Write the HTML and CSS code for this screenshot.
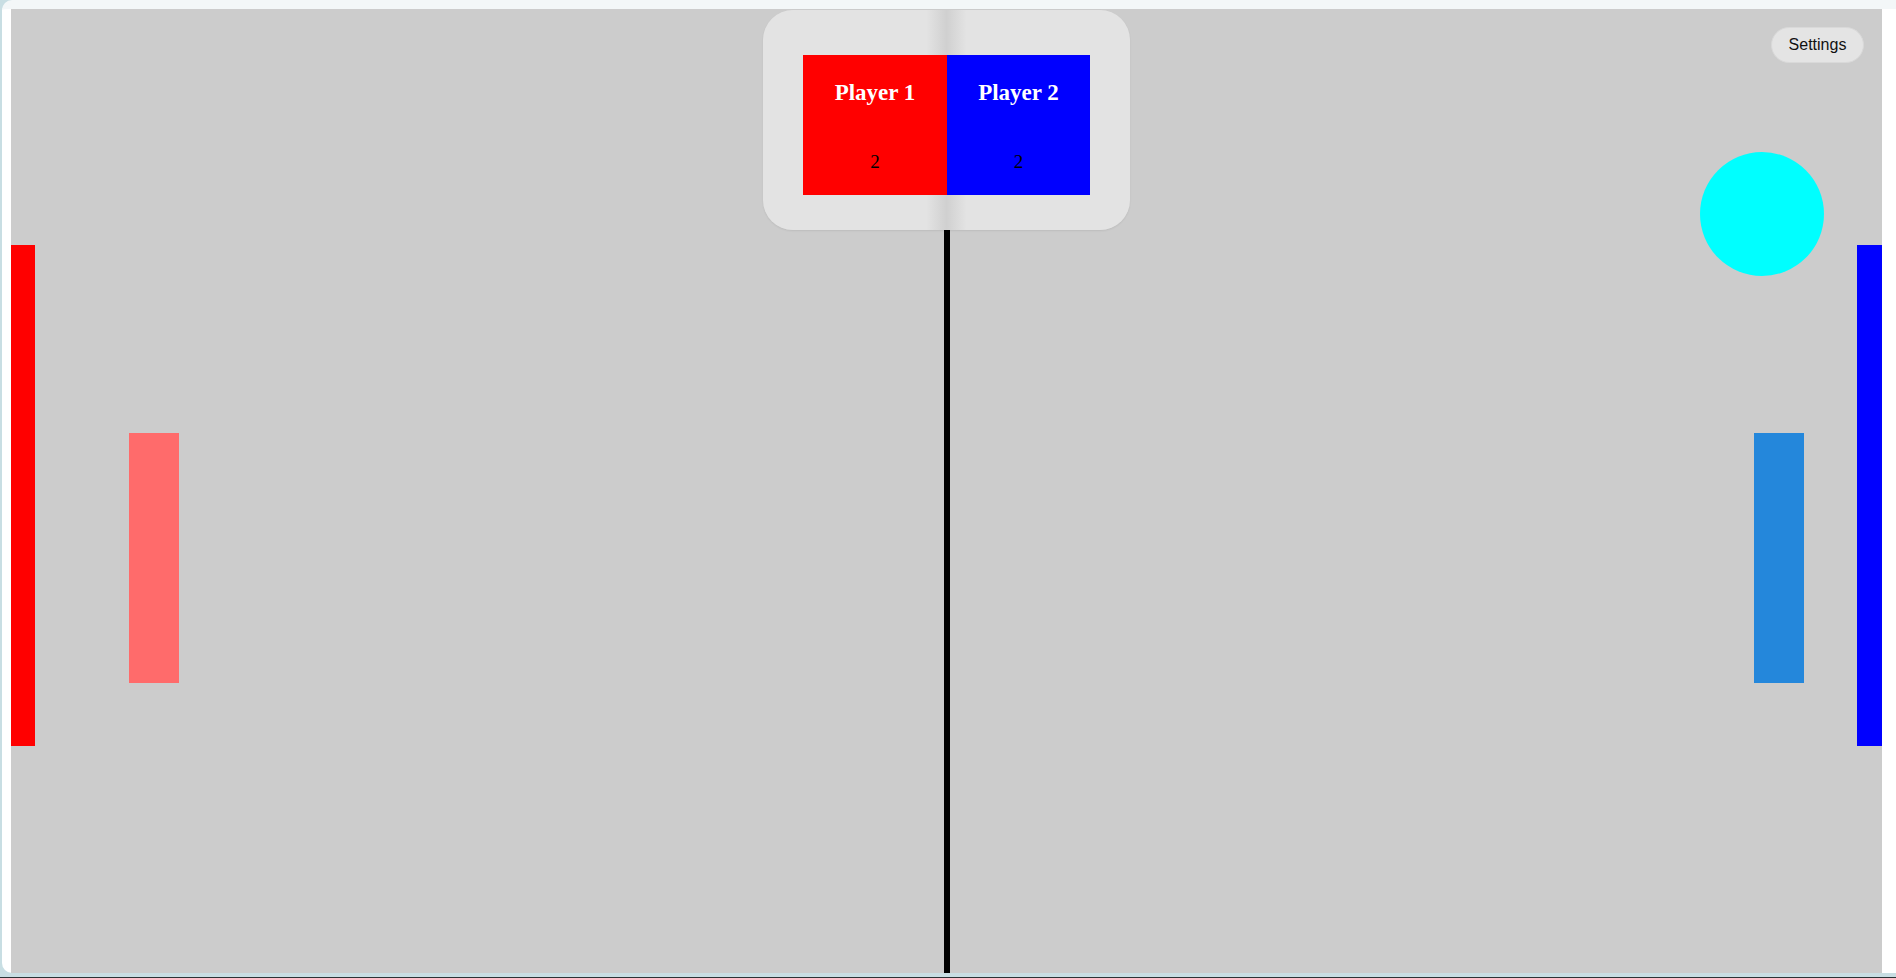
FILE: index.html
```html
<!DOCTYPE html>
<html lang="en">
<head>
<meta charset="utf-8">
<title>Pong</title>
<link rel="stylesheet" href="styles.css">
</head>
<body>
<div class="frame">
  <div class="game">
    <div class="wall wall-left"></div>
    <div class="wall wall-right"></div>
    <div class="paddle paddle-left"></div>
    <div class="paddle paddle-right"></div>
    <div class="ball"></div>
    <div class="net"></div>
    <div class="scoreboard">
      <div class="score score-p1">
        <div class="score-name">Player 1</div>
        <div class="score-value">2</div>
      </div>
      <div class="score score-p2">
        <div class="score-name">Player 2</div>
        <div class="score-value">2</div>
      </div>
    </div>
    <button class="settings">Settings</button>
  </div>
</div>
<div class="edge"></div>
</body>
</html>
```
FILE: styles.css
```css
html, body {
  margin: 0;
  padding: 0;
  height: 100%;
  overflow: hidden;
}
body {
  background: #c8dee3;
  display: flex;
  flex-direction: column;
}
.frame {
  box-sizing: border-box;
  margin-left: 2px;
  height: 973px;
  background: #ffffff;
  border-top: 9px solid #f3f7f8;
  border-radius: 10px 0 0 10px;
  padding: 0 14px 0 9px;
  flex: none;
}
.game {
  position: relative;
  height: 964px;
  background: #cccccc;
  overflow: hidden;
}
.edge {
  margin-top: auto;
  height: 1px;
  background: #2b3336;
}
.wall {
  position: absolute;
  top: 236px;
  height: 501px;
  box-sizing: border-box;
}
.wall-left {
  left: 0;
  width: 24px;
  background: #ff0000;
  border: 1px solid rgba(255, 0, 0, 0.5);
  border-left: none;
}
.wall-right {
  right: 0;
  width: 25px;
  background: #0000ff;
  border: 1px solid rgba(0, 0, 255, 0.5);
  border-right: none;
}
.paddle {
  position: absolute;
  top: 424px;
  width: 50px;
  height: 250px;
}
.paddle-left {
  left: 118px;
  background: #ff6b6b;
}
.paddle-right {
  left: 1743px;
  background: #2487db;
}
.ball {
  position: absolute;
  left: 1689px;
  top: 143px;
  width: 124px;
  height: 124px;
  border-radius: 50%;
  background: #00ffff;
}
.net {
  position: absolute;
  left: 933px;
  top: 221px;
  bottom: 0;
  width: 6px;
  background: #000000;
}
.scoreboard {
  position: absolute;
  left: 752px;
  top: 1px;
  width: 367px;
  height: 220px;
  box-sizing: border-box;
  padding: 45px 40px 0 40px;
  border-radius: 30px;
  background: linear-gradient(to right, #e3e3e3 0, #e3e3e3 calc(50% - 20px), #d0d0d0 50%, #e3e3e3 calc(50% + 20px), #e3e3e3 100%);
  box-shadow: 0 1px 2px rgba(0, 0, 0, 0.08);
  display: flex;
}
.score {
  width: 144px;
  height: 140px;
  box-sizing: border-box;
  padding-top: 26px;
  text-align: center;
  font-family: "Liberation Serif", "Times New Roman", serif;
}
.score-p1 { background: #ff0000; width: 144px; }
.score-p2 { background: #0000ff; width: 143px; }
.score-name {
  font-size: 23px;
  line-height: 23px;
  font-weight: bold;
  color: #ffffff;
}
.score-value {
  margin-top: 48px;
  font-size: 19px;
  line-height: 19px;
  color: #000000;
}
.settings {
  position: absolute;
  right: 18px;
  top: 18px;
  width: 93px;
  height: 36px;
  box-sizing: border-box;
  border: 1px solid #d9d9d9;
  border-radius: 18px;
  background: #e4e4e4;
  font-family: "Liberation Sans", Arial, sans-serif;
  font-size: 16px;
  color: #111111;
  padding: 0;
  cursor: pointer;
}
```
